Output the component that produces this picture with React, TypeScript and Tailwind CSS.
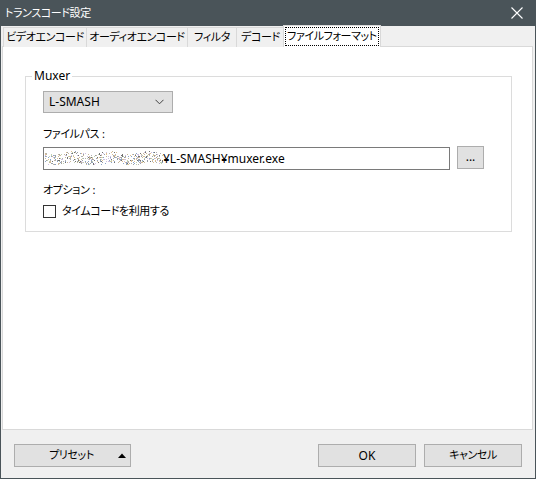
import React from "react";

const FONT = { fontFamily: '"Noto Sans", "Noto Sans CJK JP", sans-serif', fontFeatureSettings: '"palt"' };
const JP = "text-[11px] tracking-[-0.4px]";

function Noise() {
  let s = 12345;
  const rnd = () => {
    s = (s * 1103515245 + 12345) & 0x7fffffff;
    return s / 0x7fffffff;
  };
  const rects: React.ReactNode[] = [];
  const colors = ["#9aa0a6", "#c8b89a", "#8aa3c8", "#b0b0b0", "#d0c0e0", "#707070", "#c0d0b0", "#e0c090"];
  for (let i = 0; i < 520; i++) {
    const x = Math.floor(rnd() * 118);
    const y = Math.floor(2 + rnd() * 11 + Math.sin(x / 6) * 1.5);
    const c = colors[Math.floor(rnd() * colors.length)];
    rects.push(<rect key={i} x={x} y={y} width={1} height={1} fill={c} />);
  }
  return (
    <svg width="118" height="15" viewBox="0 0 118 15" className="shrink-0">
      {rects}
    </svg>
  );
}

function Colon() {
  return <span className="pl-[3px] pr-[4px]" style={{ fontFeatureSettings: "normal" }}>:</span>;
}

function Tab({ label, w }: { label: string; w: string }) {
  return (
    <div className={`${w} shrink-0 h-[20px] mt-[1px] border border-[#d9d9d9] border-b-0 -ml-px first:ml-0 flex items-center justify-center ${JP} text-black bg-[#f0f0f0] whitespace-nowrap`}>
      {label}
    </div>
  );
}

export default function App() {
  return (
    <div className="w-[536px] h-[479px] bg-[#4a5459] flex flex-col" style={FONT}>
      {/* title bar */}
      <div className={`h-[26px] flex items-center justify-between pl-[5px] pr-[13px] text-white ${JP}`}>
        <span>トランスコード設定</span>
        <svg width="12" height="12" viewBox="0 0 12 12">
          <path d="M0.5 0.5 L11.5 11.5 M11.5 0.5 L0.5 11.5" stroke="#ffffff" strokeWidth="1.1" />
        </svg>
      </div>
      {/* content */}
      <div className="flex-1 mx-px mb-px bg-[#f0f0f0] flex flex-col">
        {/* tabs */}
        <div className="h-[21px] flex items-end pl-[2px] relative z-10">
          <div className="flex items-end">
            <Tab label="ビデオエンコード" w="w-[84px]" />
            <Tab label="オーディオエンコード" w="w-[102px]" />
            <Tab label="フィルタ" w="w-[50px]" />
            <Tab label="デコード" w="w-[49px]" />
            <div className={`w-[98px] shrink-0 h-[22px] -ml-[2px] border border-[#d9d9d9] border-b-0 bg-white flex items-start justify-center pt-[1px] ${JP} text-black whitespace-nowrap`}>
              <span className="w-[94px] h-[19px] border border-dotted border-black flex items-center justify-center">ファイルフォーマット</span>
            </div>
          </div>
        </div>
        {/* panel */}
        <div className="h-[384px] ml-px mr-[2px] -mt-px bg-white border border-[#d9d9d9] pt-[26px] pl-[22px] pr-[20px]">
          <fieldset className="border border-[#dcdcdc] h-[164px] pl-[17px] pr-[20px] -mt-[5px]">
            <legend className="-ml-[11px] px-[2px] text-[12px] leading-[16px] text-black">Muxer</legend>
            <div className="mt-[7px] w-[130px] h-[22px] bg-[#e1e1e1] border border-[#adadad] flex items-center justify-between pl-[5px] pr-[8px] text-[12px] text-black">
              <span>L-SMASH</span>
              <svg width="9" height="6" viewBox="0 0 9 6">
                <path d="M0.5 0.8 L4.5 4.8 L8.5 0.8" stroke="#404040" strokeWidth="1" fill="none" />
              </svg>
            </div>
            <div className={`mt-[13px] ${JP} leading-[16px] text-black`}>ファイルパス<Colon /></div>
            <div className="mt-[5px] flex items-center gap-[7px]">
              <div className="w-[407px] h-[23px] border border-[#7a7a7a] bg-white flex items-center pl-[1px] text-[12px] text-black">
                <Noise />
                <span>¥L-SMASH¥muxer.exe</span>
              </div>
              <div className="w-[27px] h-[23px] -mt-[2px] bg-[#e1e1e1] border border-[#adadad] flex items-center justify-center text-[12px] text-black leading-none pb-[2px]">
                ...
              </div>
            </div>
            <div className={`mt-[12px] ${JP} leading-[16px] text-black`}>オプション<Colon /></div>
            <div className="mt-[5px] flex items-center gap-[6px]">
              <div className="w-[13px] h-[13px] border border-[#333333] bg-white" />
              <span className={`${JP} leading-[16px] text-black`}>タイムコードを利用する</span>
            </div>
          </fieldset>
        </div>
        {/* bottom bar */}
        <div className="flex-1 flex items-start pt-[14px] pl-[13px] pr-[13px]">
          <div className={`w-[117px] h-[23px] bg-[#e1e1e1] border border-[#adadad] flex items-center ${JP} text-black relative`}>
            <span className="w-full text-center pr-[2px]">プリセット</span>
            <svg width="8" height="5" viewBox="0 0 8 5" className="absolute right-[4px] top-[8px]">
              <path d="M0 5 L4 0.5 L8 5 Z" fill="#000000" />
            </svg>
          </div>
          <div className="flex-1" />
          <div className="w-[98px] h-[23px] bg-[#e1e1e1] border border-[#adadad] flex items-center justify-center text-[12px] text-black">
            OK
          </div>
          <div className={`w-[98px] h-[23px] ml-[8px] bg-[#e1e1e1] border border-[#adadad] flex items-center justify-center ${JP} text-black`}>
            キャンセル
          </div>
        </div>
      </div>
    </div>
  );
}
